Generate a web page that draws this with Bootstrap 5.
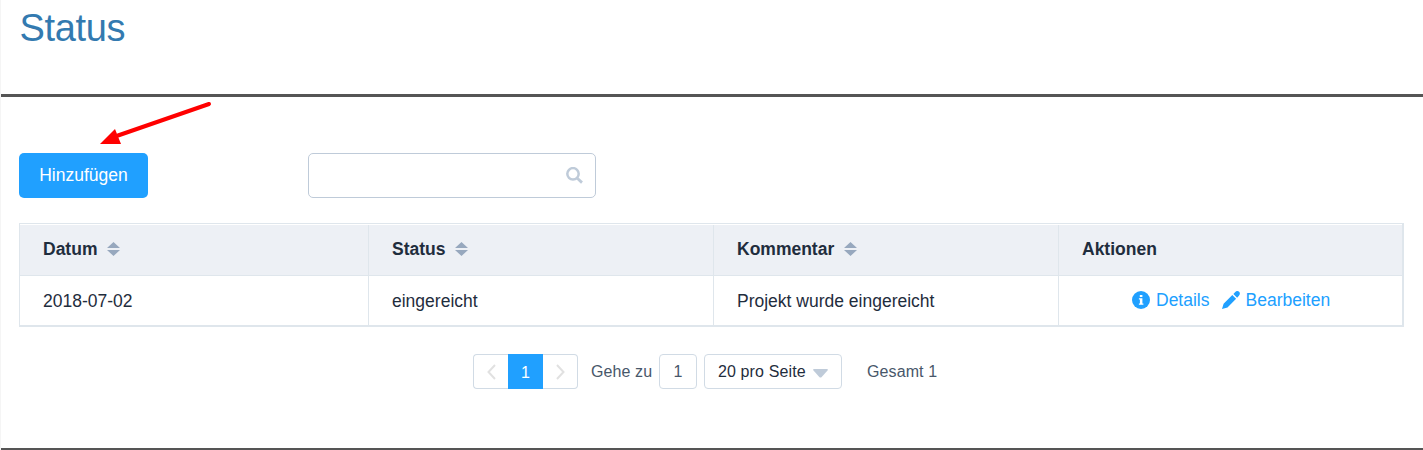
<!DOCTYPE html>
<html lang="de">
<head>
<meta charset="utf-8">
<meta name="viewport" content="width=device-width, initial-scale=1">
<title>Status</title>
<link rel="stylesheet" href="https://cdn.jsdelivr.net/npm/bootstrap@5.3.0/dist/css/bootstrap.min.css">
<style>
body{font-family:"Liberation Sans",Arial,sans-serif;font-size:17.5px;line-height:24px;color:#1f2d3d;background:#fff;overflow:hidden}
.page{height:450px;border-left:1px solid #f5f5f5;padding:0 19px 0 18px}
.page-head{height:97px;border-bottom:3px solid #555;margin:0 -19px 0 -18px;padding:5px 18.5px}
.page-head h1{font-size:38px;letter-spacing:-.35px;line-height:46px;color:#337ab0;font-weight:400;margin:0}
.toolbar{padding-top:56px;height:126px}
.btn-add{width:129px;height:45px;background:#20a0ff;border:0;border-radius:5px;color:#fff;font-size:17.5px;line-height:24px;padding:0 0 2px}
.search{width:288px;height:45px;margin-left:160px}
.search input{height:45px;border:1px solid #bfcbd9;border-radius:5px;padding:0 40px 0 12px}
.search svg{position:absolute;right:13px;top:14px}
.grid-table{width:1385px;height:104px;border:1px solid #dfe6ec;border-right-width:2px;border-bottom-width:2px;padding-top:1px}
.grid-table table{table-layout:fixed;border-collapse:separate;border-spacing:0;width:1382px;margin:0}
.grid-table th,.grid-table td{border-right:1px solid #dfe6ec;padding:0 0 0 23px;vertical-align:middle;white-space:nowrap}
.grid-table th:last-child,.grid-table td:last-child{border-right:0}
.grid-table th{height:51px;background:#edf0f5;border-bottom:1px solid #dfe6ec;padding-bottom:2px}
.grid-table td{height:49px}
.grid-table th svg{margin-left:10px;vertical-align:-1px}
.grid-table td.actions{padding:0 0 2px 73px}
.actions a{color:#20a0ff;text-decoration:none}
.actions a+a{margin-left:12px}
.actions span{margin-left:6px}
.pager{height:35px;margin-top:27px;font-size:16px;color:#48576a;padding-left:454px}
.pager .cell{height:35px;border:1px solid #d1dbe5;background:#fff}
.pager .cur{width:35px;background:#20a0ff;color:#fff;border-color:#20a0ff;padding-top:2px}
.foot-line{height:2px;background:#555;margin:59px -19px 0 -18px}
.arrow{position:absolute;left:96px;top:98px}
</style>
</head>
<body>
<main class="page">
  <header class="page-head"><h1>Status</h1></header>
  <div class="toolbar d-flex align-items-start">
    <button class="btn btn-add" type="button">Hinzufügen</button>
    <div class="search position-relative">
      <input class="form-control" type="text" aria-label="Suche">
      <svg width="17" height="17" viewBox="0 0 17 17" fill="none" stroke="#bfcbd9"><circle cx="7" cy="6.8" r="5.7" stroke-width="2.5"/><path d="M11 11l5 4.6" stroke-width="2.8"/></svg>
    </div>
  </div>
  <div class="grid-table">
    <table>
      <colgroup><col style="width:349px"><col style="width:345px"><col style="width:345px"><col></colgroup>
      <thead><tr>
        <th>Datum<svg width="13" height="14" fill="#97a8be"><path d="M0 6L6.5 0 13 6zM0 8h13L6.5 14z"/></svg></th>
        <th>Status<svg width="13" height="14" fill="#97a8be"><path d="M0 6L6.5 0 13 6zM0 8h13L6.5 14z"/></svg></th>
        <th>Kommentar<svg width="13" height="14" fill="#97a8be"><path d="M0 6L6.5 0 13 6zM0 8h13L6.5 14z"/></svg></th>
        <th>Aktionen</th>
      </tr></thead>
      <tbody><tr>
        <td>2018-07-02</td>
        <td>eingereicht</td>
        <td>Projekt wurde eingereicht</td>
        <td class="actions"><div class="d-flex align-items-center">
          <a class="d-flex align-items-center" href="#"><svg width="18" height="18" viewBox="0 0 18 18"><circle cx="9" cy="9" r="9" fill="#20a0ff"/><path d="M7.8 3.900h2.600v2.100H7.800zM6.900 7.300h3.500v5.200h1v1.300H6.900v-1.300h1V8.600h-1z" fill="#fff"/></svg><span>Details</span></a>
          <a class="d-flex align-items-center" href="#"><svg width="18" height="18" viewBox="0 0 18 18" fill="#20a0ff"><path d="M0 18l1.600-5.300L10.300 4l3.800 3.800-8.600 8.600zM11.400 3l1.400-1.600c1.500-1.600 3.300-1.600 4.300-.6 1.100 1 1.100 2.800-.4 4.300L15.100 6.700z"/></svg><span>Bearbeiten</span></a>
        </div></td>
      </tr></tbody>
    </table>
  </div>
  <nav class="pager d-flex align-items-center" aria-label="Seiten">
    <span class="cell d-flex align-items-center justify-content-center rounded-start-1" style="width:35px;border-right:0"><svg width="9" height="16" fill="none" stroke="#e1e1e1" stroke-width="2"><path d="M8 1L1.500 8 8 15"/></svg></span>
    <span class="cell cur d-flex align-items-center justify-content-center">1</span>
    <span class="cell d-flex align-items-center justify-content-center rounded-end-1" style="width:35px;border-left:0"><svg width="9" height="16" fill="none" stroke="#e1e1e1" stroke-width="2"><path d="M1 1l6.500 7L1 15"/></svg></span>
    <span class="go" style="width:81px;padding-left:13px;letter-spacing:.1px">Gehe zu</span>
    <span class="cell d-flex align-items-center justify-content-center rounded-1" style="width:38px">1</span>
    <span class="cell d-flex align-items-center rounded-1" style="width:138px;margin-left:7px;padding-left:13px;color:#1f2d3d;letter-spacing:.12px">20 pro Seite<svg style="margin:3px 0 0 7px" width="15" height="9" fill="#bfcbd9"><path d="M1 0h13q1.500 .3.500 1.500L8.700 8q-1.200 1-2.400 0L.5 1.500Q-.5 .300 1 0z"/></svg></span>
    <span class="total" style="margin-left:25px;letter-spacing:.1px">Gesamt 1</span>
  </nav>
  <div class="foot-line"></div>
</main>
<svg class="arrow" width="120" height="50" aria-hidden="true"><path d="M113 6L22 37.500" stroke="red" stroke-width="4" stroke-linecap="round"/><path d="M4 46L19 31l6 15z" fill="red"/></svg>
<script src="https://cdn.jsdelivr.net/npm/bootstrap@5.3.0/dist/js/bootstrap.bundle.min.js"></script>
</body>
</html>
